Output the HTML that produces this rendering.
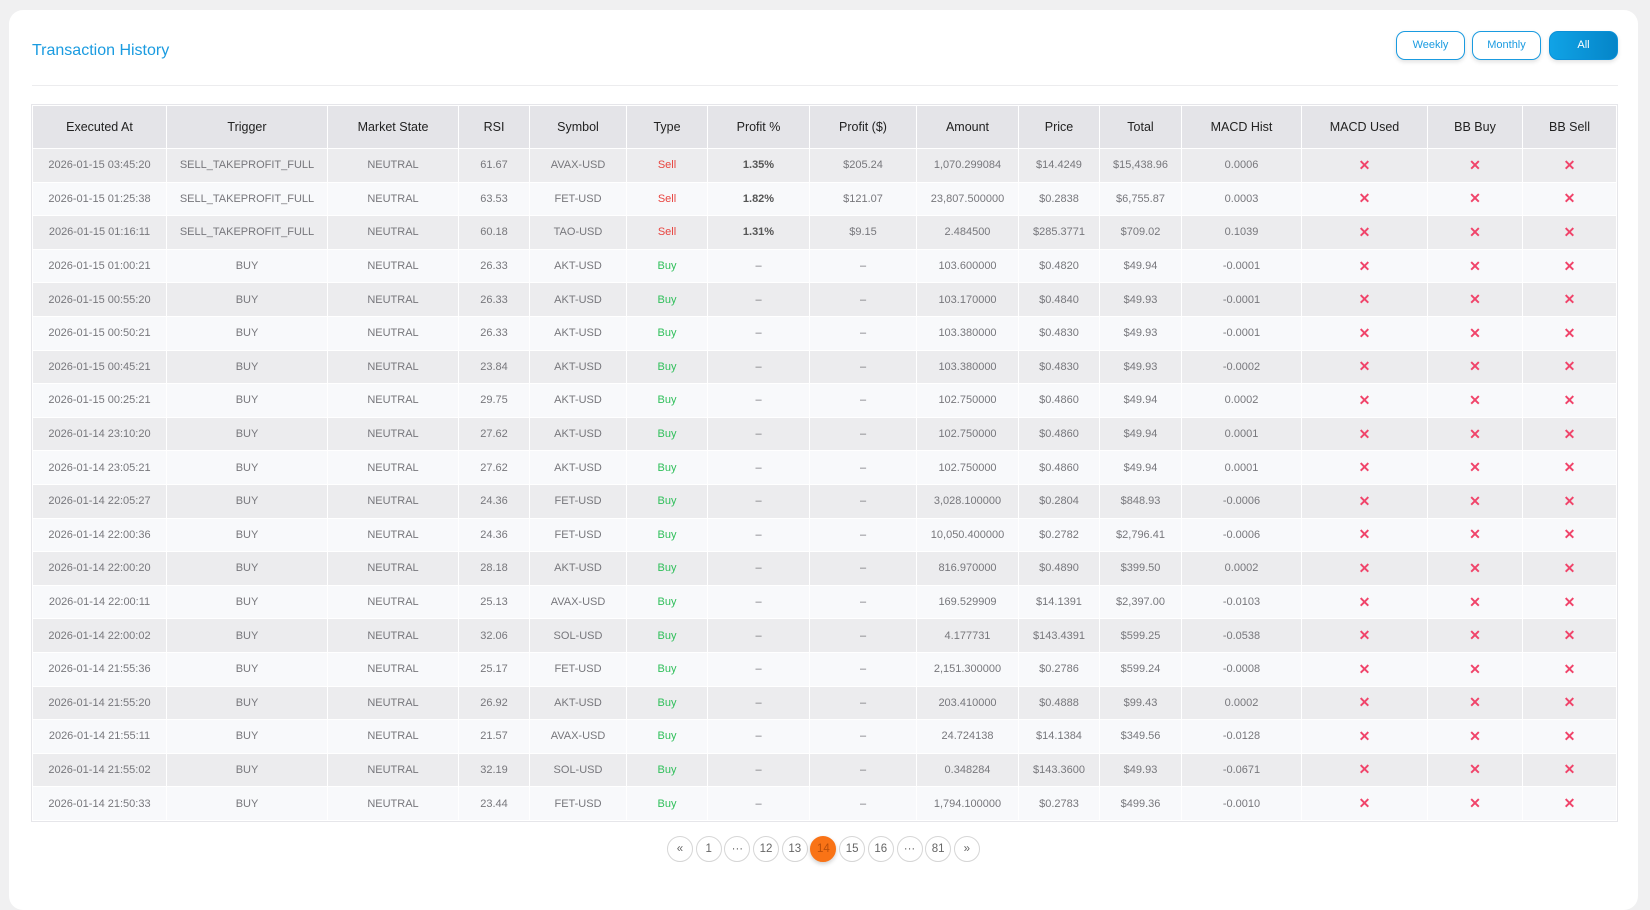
<!DOCTYPE html>
<html><head><meta charset="utf-8"><style>
*{box-sizing:border-box;margin:0;padding:0}
body{width:1650px;height:881px;background:#f0f0f1;font-family:"Liberation Sans",sans-serif;overflow:hidden;position:relative}
.card{position:absolute;left:9px;top:10px;width:1629px;height:900px;background:#fff;border-radius:14px}
.title{position:absolute;left:32px;top:42px;font-size:16px;color:#1a9be0}
.hr{position:absolute;left:32px;top:85px;width:1586px;height:1px;background:#ececee}
.btn{position:absolute;top:31px;height:29px;width:69px;border:1.5px solid #1a9be0;border-radius:9px;color:#1a9be0;font-size:11px;text-align:center;line-height:26px;background:#fff;box-shadow:0 2px 4px rgba(0,0,0,.12)}
.btn.on{background:linear-gradient(90deg,#10a3e6,#0585c8);color:#fff;border-color:#0a90d8}
table{position:absolute;left:32px;top:105px;width:1584px;border-collapse:collapse;table-layout:fixed;outline:1px solid #e6e6ea}
th,td{border:1.5px solid #fff;text-align:center;white-space:nowrap;overflow:hidden}
th{background:#e4e4e8;height:43px;font-size:12.5px;font-weight:normal;color:#222}
td{height:33.6px;font-size:11px;color:#77777c}
tr:nth-child(even) td{background:#ececee}
tr:nth-child(odd) td{background:#f8f9fb}
.s{color:#e8443f}.b{color:#2fbf5a}.x{color:#f0446a;font-size:14px;font-weight:bold}
.p{color:#555;font-weight:bold}
.pg{position:absolute;top:836px;left:667px;display:flex;gap:2.7px}
.pg span{width:26px;height:26px;border:1px solid #d6d6d6;border-radius:50%;font-size:11.5px;color:#666;text-align:center;line-height:24px;background:#fff}
.pg span.on{background:#f97316;border-color:#f97316;color:#b94e0a;box-shadow:0 2px 4px rgba(0,0,0,.2)}
</style></head><body>
<div class="card"></div>
<div class="title">Transaction History</div>
<div class="btn" style="left:1396px">Weekly</div>
<div class="btn" style="left:1472px">Monthly</div>
<div class="btn on" style="left:1549px">All</div>
<div class="hr"></div>
<table>
<colgroup><col style="width:134px"><col style="width:161px"><col style="width:131px"><col style="width:71px"><col style="width:97px"><col style="width:81px"><col style="width:102px"><col style="width:107px"><col style="width:102px"><col style="width:81px"><col style="width:82px"><col style="width:120px"><col style="width:126px"><col style="width:95px"><col style="width:94px"></colgroup>
<tr><th>Executed At</th><th>Trigger</th><th>Market State</th><th>RSI</th><th>Symbol</th><th>Type</th><th>Profit %</th><th>Profit ($)</th><th>Amount</th><th>Price</th><th>Total</th><th>MACD Hist</th><th>MACD Used</th><th>BB Buy</th><th>BB Sell</th></tr>
<tr><td>2026-01-15 03:45:20</td><td>SELL_TAKEPROFIT_FULL</td><td>NEUTRAL</td><td>61.67</td><td>AVAX-USD</td><td class="s">Sell</td><td class="p">1.35%</td><td>$205.24</td><td>1,070.299084</td><td>$14.4249</td><td>$15,438.96</td><td>0.0006</td><td class="x">✕</td><td class="x">✕</td><td class="x">✕</td></tr>
<tr><td>2026-01-15 01:25:38</td><td>SELL_TAKEPROFIT_FULL</td><td>NEUTRAL</td><td>63.53</td><td>FET-USD</td><td class="s">Sell</td><td class="p">1.82%</td><td>$121.07</td><td>23,807.500000</td><td>$0.2838</td><td>$6,755.87</td><td>0.0003</td><td class="x">✕</td><td class="x">✕</td><td class="x">✕</td></tr>
<tr><td>2026-01-15 01:16:11</td><td>SELL_TAKEPROFIT_FULL</td><td>NEUTRAL</td><td>60.18</td><td>TAO-USD</td><td class="s">Sell</td><td class="p">1.31%</td><td>$9.15</td><td>2.484500</td><td>$285.3771</td><td>$709.02</td><td>0.1039</td><td class="x">✕</td><td class="x">✕</td><td class="x">✕</td></tr>
<tr><td>2026-01-15 01:00:21</td><td>BUY</td><td>NEUTRAL</td><td>26.33</td><td>AKT-USD</td><td class="b">Buy</td><td>–</td><td>–</td><td>103.600000</td><td>$0.4820</td><td>$49.94</td><td>-0.0001</td><td class="x">✕</td><td class="x">✕</td><td class="x">✕</td></tr>
<tr><td>2026-01-15 00:55:20</td><td>BUY</td><td>NEUTRAL</td><td>26.33</td><td>AKT-USD</td><td class="b">Buy</td><td>–</td><td>–</td><td>103.170000</td><td>$0.4840</td><td>$49.93</td><td>-0.0001</td><td class="x">✕</td><td class="x">✕</td><td class="x">✕</td></tr>
<tr><td>2026-01-15 00:50:21</td><td>BUY</td><td>NEUTRAL</td><td>26.33</td><td>AKT-USD</td><td class="b">Buy</td><td>–</td><td>–</td><td>103.380000</td><td>$0.4830</td><td>$49.93</td><td>-0.0001</td><td class="x">✕</td><td class="x">✕</td><td class="x">✕</td></tr>
<tr><td>2026-01-15 00:45:21</td><td>BUY</td><td>NEUTRAL</td><td>23.84</td><td>AKT-USD</td><td class="b">Buy</td><td>–</td><td>–</td><td>103.380000</td><td>$0.4830</td><td>$49.93</td><td>-0.0002</td><td class="x">✕</td><td class="x">✕</td><td class="x">✕</td></tr>
<tr><td>2026-01-15 00:25:21</td><td>BUY</td><td>NEUTRAL</td><td>29.75</td><td>AKT-USD</td><td class="b">Buy</td><td>–</td><td>–</td><td>102.750000</td><td>$0.4860</td><td>$49.94</td><td>0.0002</td><td class="x">✕</td><td class="x">✕</td><td class="x">✕</td></tr>
<tr><td>2026-01-14 23:10:20</td><td>BUY</td><td>NEUTRAL</td><td>27.62</td><td>AKT-USD</td><td class="b">Buy</td><td>–</td><td>–</td><td>102.750000</td><td>$0.4860</td><td>$49.94</td><td>0.0001</td><td class="x">✕</td><td class="x">✕</td><td class="x">✕</td></tr>
<tr><td>2026-01-14 23:05:21</td><td>BUY</td><td>NEUTRAL</td><td>27.62</td><td>AKT-USD</td><td class="b">Buy</td><td>–</td><td>–</td><td>102.750000</td><td>$0.4860</td><td>$49.94</td><td>0.0001</td><td class="x">✕</td><td class="x">✕</td><td class="x">✕</td></tr>
<tr><td>2026-01-14 22:05:27</td><td>BUY</td><td>NEUTRAL</td><td>24.36</td><td>FET-USD</td><td class="b">Buy</td><td>–</td><td>–</td><td>3,028.100000</td><td>$0.2804</td><td>$848.93</td><td>-0.0006</td><td class="x">✕</td><td class="x">✕</td><td class="x">✕</td></tr>
<tr><td>2026-01-14 22:00:36</td><td>BUY</td><td>NEUTRAL</td><td>24.36</td><td>FET-USD</td><td class="b">Buy</td><td>–</td><td>–</td><td>10,050.400000</td><td>$0.2782</td><td>$2,796.41</td><td>-0.0006</td><td class="x">✕</td><td class="x">✕</td><td class="x">✕</td></tr>
<tr><td>2026-01-14 22:00:20</td><td>BUY</td><td>NEUTRAL</td><td>28.18</td><td>AKT-USD</td><td class="b">Buy</td><td>–</td><td>–</td><td>816.970000</td><td>$0.4890</td><td>$399.50</td><td>0.0002</td><td class="x">✕</td><td class="x">✕</td><td class="x">✕</td></tr>
<tr><td>2026-01-14 22:00:11</td><td>BUY</td><td>NEUTRAL</td><td>25.13</td><td>AVAX-USD</td><td class="b">Buy</td><td>–</td><td>–</td><td>169.529909</td><td>$14.1391</td><td>$2,397.00</td><td>-0.0103</td><td class="x">✕</td><td class="x">✕</td><td class="x">✕</td></tr>
<tr><td>2026-01-14 22:00:02</td><td>BUY</td><td>NEUTRAL</td><td>32.06</td><td>SOL-USD</td><td class="b">Buy</td><td>–</td><td>–</td><td>4.177731</td><td>$143.4391</td><td>$599.25</td><td>-0.0538</td><td class="x">✕</td><td class="x">✕</td><td class="x">✕</td></tr>
<tr><td>2026-01-14 21:55:36</td><td>BUY</td><td>NEUTRAL</td><td>25.17</td><td>FET-USD</td><td class="b">Buy</td><td>–</td><td>–</td><td>2,151.300000</td><td>$0.2786</td><td>$599.24</td><td>-0.0008</td><td class="x">✕</td><td class="x">✕</td><td class="x">✕</td></tr>
<tr><td>2026-01-14 21:55:20</td><td>BUY</td><td>NEUTRAL</td><td>26.92</td><td>AKT-USD</td><td class="b">Buy</td><td>–</td><td>–</td><td>203.410000</td><td>$0.4888</td><td>$99.43</td><td>0.0002</td><td class="x">✕</td><td class="x">✕</td><td class="x">✕</td></tr>
<tr><td>2026-01-14 21:55:11</td><td>BUY</td><td>NEUTRAL</td><td>21.57</td><td>AVAX-USD</td><td class="b">Buy</td><td>–</td><td>–</td><td>24.724138</td><td>$14.1384</td><td>$349.56</td><td>-0.0128</td><td class="x">✕</td><td class="x">✕</td><td class="x">✕</td></tr>
<tr><td>2026-01-14 21:55:02</td><td>BUY</td><td>NEUTRAL</td><td>32.19</td><td>SOL-USD</td><td class="b">Buy</td><td>–</td><td>–</td><td>0.348284</td><td>$143.3600</td><td>$49.93</td><td>-0.0671</td><td class="x">✕</td><td class="x">✕</td><td class="x">✕</td></tr>
<tr><td>2026-01-14 21:50:33</td><td>BUY</td><td>NEUTRAL</td><td>23.44</td><td>FET-USD</td><td class="b">Buy</td><td>–</td><td>–</td><td>1,794.100000</td><td>$0.2783</td><td>$499.36</td><td>-0.0010</td><td class="x">✕</td><td class="x">✕</td><td class="x">✕</td></tr>
</table>
<div class="pg"><span>«</span><span>1</span><span>···</span><span>12</span><span>13</span><span class="on">14</span><span>15</span><span>16</span><span>···</span><span>81</span><span>»</span></div>
</body></html>
